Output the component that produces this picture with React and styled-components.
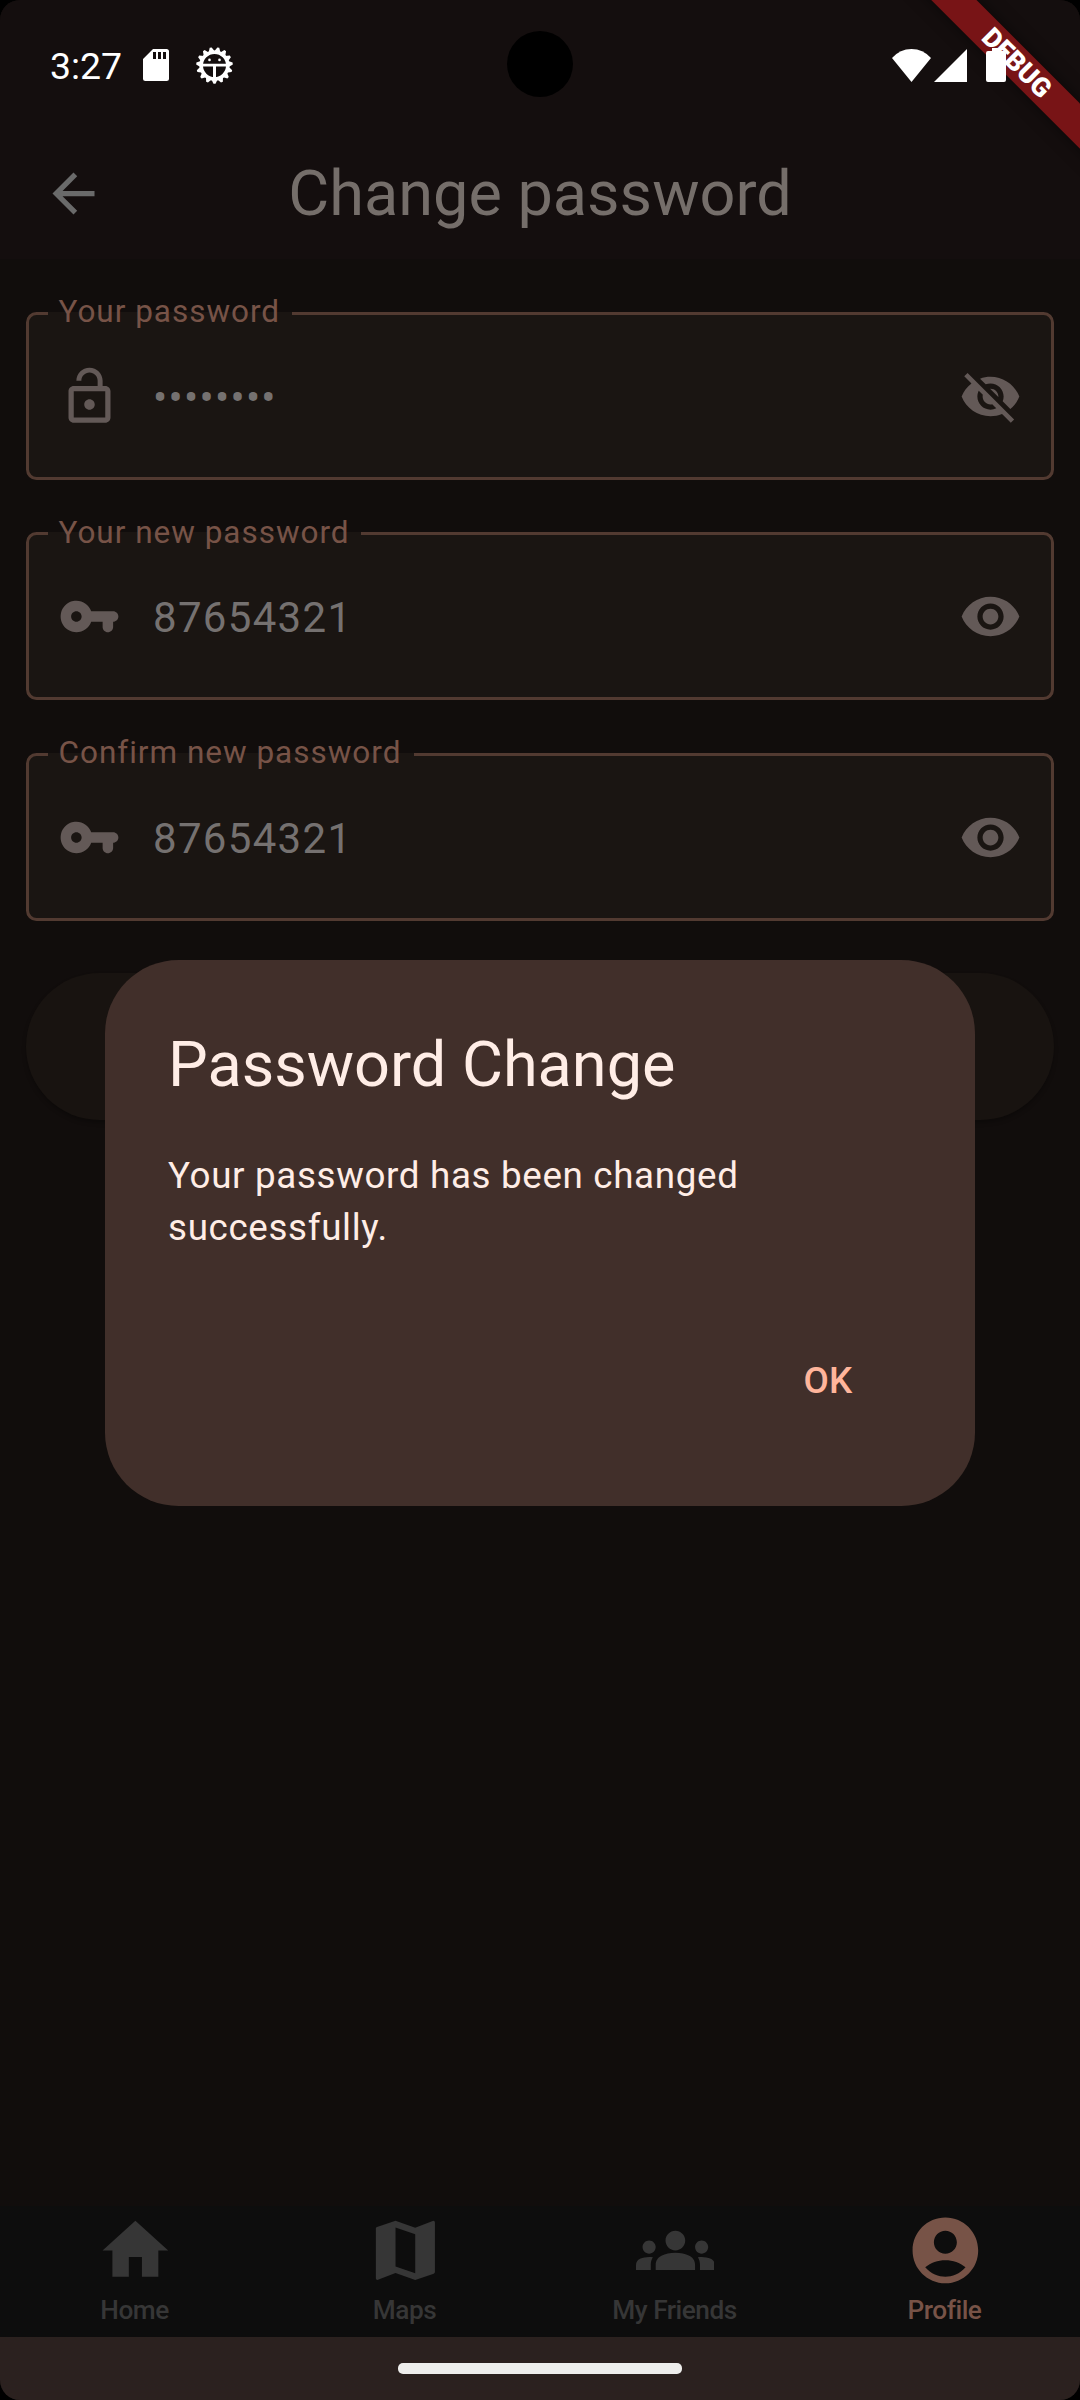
import React from 'react';
import styled, { createGlobalStyle } from 'styled-components';

const GlobalStyle = createGlobalStyle`
  * { box-sizing: border-box; }
  html, body { margin: 0; padding: 0; background: #000; }
  body { font-family: Roboto, "Liberation Sans", sans-serif; }
`;

const Screen = styled.div`
  position: relative;
  display: flex;
  flex-direction: column;
  width: 1080px;
  height: 2400px;
  overflow: hidden;
  border-radius: 20px;
  background: #110d0c;
`;

const Header = styled.header`
  display: flex;
  flex-direction: column;
  flex: none;
  height: 259px;
  background: #140e0e;
`;

const StatusBar = styled.div`
  position: relative;
  z-index: 2;
  display: flex;
  align-items: center;
  justify-content: space-between;
  height: 128px;
  padding: 2px 74px 0 50px;
`;

const StatusGroup = styled.div`
  display: flex;
  align-items: center;
`;

const Clock = styled.span`
  width: 93px;
  padding-top: 2px;
  color: #fff;
  font-size: 37.4px;
  line-height: 43px;
`;

const Camera = styled.div`
  position: absolute;
  top: 31px;
  left: 507px;
  width: 66px;
  height: 66px;
  border-radius: 50%;
  background: #000;
`;

const Glyph = styled.svg`
  display: block;
  flex: none;
  width: ${(p) => p.$w}px;
  height: ${(p) => p.$h || p.$w}px;
  margin-left: ${(p) => p.$gap || 0}px;
  color: ${(p) => p.$color || '#fff'};
  fill: currentColor;
`;

const AppBar = styled.div`
  display: grid;
  grid-template-columns: 147px 1fr 147px;
  align-items: center;
  height: 131px;
`;

const BackButton = styled.button`
  display: flex;
  align-items: center;
  justify-content: center;
  height: 126px;
  padding: 0;
  border: 0;
  background: none;
`;

const Title = styled.h1`
  margin: 0;
  color: #756e6a;
  font-size: 63px;
  font-weight: 400;
  line-height: 80px;
  text-align: center;
`;

const Form = styled.main`
  display: flex;
  flex: 1;
  flex-direction: column;
  padding: 38px 26px 0;
`;

const Field = styled.fieldset`
  display: flex;
  flex: none;
  min-width: 0;
  height: 183px;
  margin: 0 0 ${(p) => p.$after}px;
  padding: 0 29px;
  border: 3px solid #523a31;
  border-radius: 10.5px;
  background: #1a1512;
`;

const Legend = styled.legend`
  height: 32px;
  margin-left: -10px;
  padding: 0 ${(p) => p.$end}px 0 10.5px;
  color: #775347;
  font-size: 31.5px;
  letter-spacing: 0.98px;
  line-height: ${(p) => p.$line}px;
`;

const FieldRow = styled.div`
  display: flex;
  align-items: center;
  width: 100%;
  height: 135px;
`;

const Value = styled.span`
  flex: 1;
  padding: 2px 0 0 32px;
  color: #757170;
  font-size: 42px;
  letter-spacing: 1.31px;
  line-height: 63px;
`;

const SubmitButton = styled.button`
  flex: none;
  height: 147px;
  border: 0;
  border-radius: 74px;
  background: #181310;
  box-shadow: 0 3px 4px rgba(0, 0, 0, 0.25);
`;

const Dialog = styled.section`
  position: absolute;
  top: 959.5px;
  left: 105px;
  display: flex;
  flex-direction: column;
  width: 870px;
  height: 546px;
  padding: 63px;
  border-radius: 73.5px;
  background: #412f2a;
  color: #ffede6;
`;

const DialogTitle = styled.h2`
  margin: 0;
  font-size: 63px;
  font-weight: 400;
  line-height: 84px;
`;

const DialogText = styled.p`
  margin: 43px 0 0;
  font-size: 36.75px;
  letter-spacing: 0.66px;
  line-height: 52px;
`;

const DialogActions = styled.div`
  display: flex;
  justify-content: flex-end;
  margin-top: 75px;
`;

const DialogButton = styled.button`
  width: 168px;
  height: 105px;
  padding: 0;
  border: 0;
  background: none;
  color: #ffb59b;
  font: 500 36.75px/52.5px Roboto, sans-serif;
  letter-spacing: 0.2px;
`;

const NavBar = styled.nav`
  display: grid;
  grid-template-columns: repeat(4, 1fr);
  flex: none;
  height: 131px;
  background: #0d0d0d;
`;

const NavItem = styled.a`
  display: flex;
  flex-direction: column;
  align-items: center;
  padding-top: 5px;
  color: ${(p) => (p.$active ? '#775347' : '#363636')};
`;

const NavLabel = styled.span`
  padding-right: 1px;
  font-size: 26.25px;
  font-weight: 500;
  letter-spacing: -0.5px;
  line-height: 40px;
`;

const SystemBar = styled.footer`
  display: flex;
  flex: none;
  justify-content: center;
  height: 63px;
  padding-top: 26px;
  background: #2b211f;
`;

const Handle = styled.div`
  width: 284px;
  height: 11px;
  border-radius: 5px;
  background: #eeeeec;
`;

const BannerCorner = styled.div`
  position: absolute;
  top: 0;
  right: 0;
  width: 220px;
  height: 220px;
  overflow: hidden;
  pointer-events: none;
`;

const Banner = styled.div`
  position: absolute;
  top: 47.25px;
  left: 7px;
  width: 300px;
  height: 31.5px;
  background: #781416;
  box-shadow: 0 0 16px rgba(0, 0, 0, 0.5);
  color: #fff;
  font-size: 26.8px;
  font-weight: 900;
  line-height: 32.5px;
  text-align: center;
  transform: rotate(45deg);
`;

const paths = {
  back: 'M20 11H7.83l5.59-5.59L12 4l-8 8 8 8 1.41-1.41L7.83 13H20v-2z',
  lock: 'M12 17c1.1 0 2-.9 2-2s-.9-2-2-2-2 .9-2 2 .9 2 2 2zm6-9h-1V6c0-2.76-2.24-5-5-5S7 3.24 7 6h1.9c0-1.71 1.39-3.1 3.1-3.1 1.71 0 3.1 1.39 3.1 3.1v2H6c-1.1 0-2 .9-2 2v10c0 1.1.9 2 2 2h12c1.1 0 2-.9 2-2V10c0-1.1-.9-2-2-2zm0 12H6V10h12v10z',
  key: 'M12.65 10C11.7 7.31 8.9 5.5 5.77 6.12c-2.29.46-4.15 2.29-4.63 4.58C.32 14.57 3.26 18 7 18c2.61 0 4.83-1.67 5.65-4H17v2c0 1.1.9 2 2 2s2-.9 2-2v-2c1.1 0 2-.9 2-2s-.9-2-2-2h-8.35zM7 14c-1.1 0-2-.9-2-2s.9-2 2-2 2 .9 2 2-.9 2-2 2z',
  eye: 'M12 4.5C7 4.5 2.73 7.61 1 12c1.73 4.39 6 7.5 11 7.5s9.27-3.11 11-7.5c-1.73-4.39-6-7.5-11-7.5zM12 17c-2.76 0-5-2.24-5-5s2.24-5 5-5 5 2.24 5 5-2.24 5-5 5zm0-8c-1.66 0-3 1.34-3 3s1.34 3 3 3 3-1.34 3-3-1.34-3-3-3z',
  eyeOff: 'M12 7c2.76 0 5 2.24 5 5 0 .65-.13 1.26-.36 1.83l2.92 2.92c1.51-1.26 2.7-2.89 3.43-4.75-1.73-4.39-6-7.5-11-7.5-1.4 0-2.74.25-3.98.7l2.16 2.16C10.74 7.13 11.35 7 12 7zM2 4.27l2.28 2.28.46.46C3.08 8.3 1.78 10.02 1 12c1.73 4.39 6 7.5 11 7.5 1.55 0 3.03-.3 4.38-.84l.42.42L19.73 22 21 20.73 3.27 3 2 4.27zM7.53 9.8l1.55 1.55c-.05.21-.08.43-.08.65 0 1.66 1.34 3 3 3 .22 0 .44-.03.65-.08l1.55 1.55c-.67.33-1.41.53-2.2.53-2.76 0-5-2.24-5-5 0-.79.2-1.53.53-2.2zm4.31-.78l3.15 3.15.02-.16c0-1.66-1.34-3-3-3l-.17.01z',
  home: 'M10 20v-6h4v6h5v-8h3L12 3 2 12h3v8z',
  map: 'M20.5 3l-.16.03L15 5.1 9 3 3.36 4.9c-.21.07-.36.25-.36.48V20.5c0 .28.22.5.5.5l.16-.03L9 18.9l6 2.1 5.64-1.9c.21-.07.36-.25.36-.48V3.5c0-.28-.22-.5-.5-.5zM15 19l-6-2.11V5l6 2.11V19z',
  groups: 'M4 13c1.1 0 2-.9 2-2s-.9-2-2-2-2 .9-2 2 .9 2 2 2zm1.13 1.1c-.37-.06-.74-.1-1.13-.1-.99 0-1.93.21-2.78.58C.48 14.9 0 15.62 0 16.43V18h4.5v-1.61c0-.83.23-1.61.63-2.29zM20 13c1.1 0 2-.9 2-2s-.9-2-2-2-2 .9-2 2 .9 2 2 2zm4 3.43c0-.81-.48-1.53-1.22-1.85-.85-.37-1.79-.58-2.78-.58-.39 0-.76.04-1.13.1.4.68.63 1.46.63 2.29V18H24v-1.57zm-7.76-2.78c-1.17-.52-2.61-.9-4.24-.9-1.63 0-3.07.39-4.24.9C6.68 14.13 6 15.21 6 16.39V18h12v-1.61c0-1.18-.68-2.26-1.76-2.74zM9 9c0 1.66 1.34 3 3 3s3-1.34 3-3-1.34-3-3-3-3 1.34-3 3z',
  account: 'M12 2C6.48 2 2 6.48 2 12s4.48 10 10 10 10-4.48 10-10S17.52 2 12 2zm0 4c1.93 0 3.5 1.57 3.5 3.5S13.93 13 12 13s-3.5-1.57-3.5-3.5S10.07 6 12 6zm0 14c-2.03 0-4.43-.82-6.14-2.88C7.55 15.8 9.68 15 12 15s4.45.8 6.14 2.12C16.43 19.18 14.03 20 12 20z',
};

const Icon = ({ name, size, color }) => (
  <Glyph viewBox="0 0 24 24" $w={size} $color={color}>
    <path fillRule="evenodd" d={paths[name]} />
  </Glyph>
);

const SdCard = () => (
  <Glyph viewBox="0 0 26 32" $w={26} $h={32}>
    <path fillRule="evenodd" d="M10 0h13.5Q26 0 26 2.5v27Q26 32 23.500 32h-21Q0 32 0 29.500V10zM10 3v7h3V3zM15 3v7h3V3zM20 3v7h3V3z" />
  </Glyph>
);

const gearTeeth = Array.from({ length: 15 }, (_, i) => 90 + i * 24);

const DebugGear = () => (
  <Glyph viewBox="-18.500 -18.500 37 37" $w={37} $gap={26.5}>
    <circle r="13.300" fill="none" stroke="currentColor" strokeWidth="3.600" />
    {gearTeeth.map((a) => (
      <path key={a} d="M13.500 -3.300L18.300 -1V1L13.500 3.300z" transform={`rotate(${a})`} />
    ))}
    <path d="M-13 -1.800H13V0.900H1.500V13H-1.500V0.900H-13z" />
    <circle cx="-5" cy="-5.600" r="1.300" />
    <circle cx="5" cy="-5.600" r="1.300" />
  </Glyph>
);

const Wifi = () => (
  <Glyph viewBox="0 0 39 33" $w={39} $h={33}>
    <path d="M19.500 33L0 9Q8 0 19.500 0T39 9z" />
  </Glyph>
);

const Signal = () => (
  <Glyph viewBox="0 0 33 33" $w={33} $h={33} $gap={3}>
    <path d="M33 0V33H0z" />
  </Glyph>
);

const Battery = () => (
  <Glyph viewBox="0 0 20 34" $w={20} $h={34} $gap={19}>
    <path d="M6 0h8v3h4q2 0 2 2v27q0 2-2 2H2q-2 0-2-2V5q0-2 2-2h4z" />
  </Glyph>
);

const fields = [
  { label: 'Your password', value: '••••••••', icon: 'lock', trailing: 'eyeOff', after: 37, end: 12, line: 30 },
  { label: 'Your new password', value: '87654321', icon: 'key', trailing: 'eye', after: 38, end: 11, line: 32 },
  { label: 'Confirm new password', value: '87654321', icon: 'key', trailing: 'eye', after: 52, end: 13, line: 30 },
];

const tabs = [
  { label: 'Home', icon: 'home' },
  { label: 'Maps', icon: 'map' },
  { label: 'My Friends', icon: 'groups' },
  { label: 'Profile', icon: 'account', active: true },
];

export default function App() {
  return (
    <>
      <GlobalStyle />
      <Screen>
        <Header>
          <StatusBar>
            <StatusGroup>
              <Clock>3:27</Clock>
              <SdCard />
              <DebugGear />
            </StatusGroup>
            <StatusGroup>
              <Wifi />
              <Signal />
              <Battery />
            </StatusGroup>
          </StatusBar>
          <AppBar>
            <BackButton aria-label="Back">
              <Icon name="back" size={63} color="#6a6a6a" />
            </BackButton>
            <Title>Change password</Title>
          </AppBar>
        </Header>
        <Form>
          {fields.map((f) => (
            <Field key={f.label} $after={f.after}>
              <Legend $end={f.end} $line={f.line}>{f.label}</Legend>
              <FieldRow>
                <Icon name={f.icon} size={63} color="#635957" />
                <Value>{f.value}</Value>
                <Icon name={f.trailing} size={63} color="#635957" />
              </FieldRow>
            </Field>
          ))}
          <SubmitButton aria-label="Submit" />
        </Form>
        <NavBar>
          {tabs.map((t) => (
            <NavItem key={t.label} $active={t.active}>
              <Icon name={t.icon} size={78.75} color="currentColor" />
              <NavLabel>{t.label}</NavLabel>
            </NavItem>
          ))}
        </NavBar>
        <SystemBar>
          <Handle />
        </SystemBar>
        <Camera />
        <Dialog role="dialog">
          <DialogTitle>Password Change</DialogTitle>
          <DialogText>Your password has been changed successfully.</DialogText>
          <DialogActions>
            <DialogButton>OK</DialogButton>
          </DialogActions>
        </Dialog>
        <BannerCorner>
          <Banner>DEBUG</Banner>
        </BannerCorner>
      </Screen>
    </>
  );
}
